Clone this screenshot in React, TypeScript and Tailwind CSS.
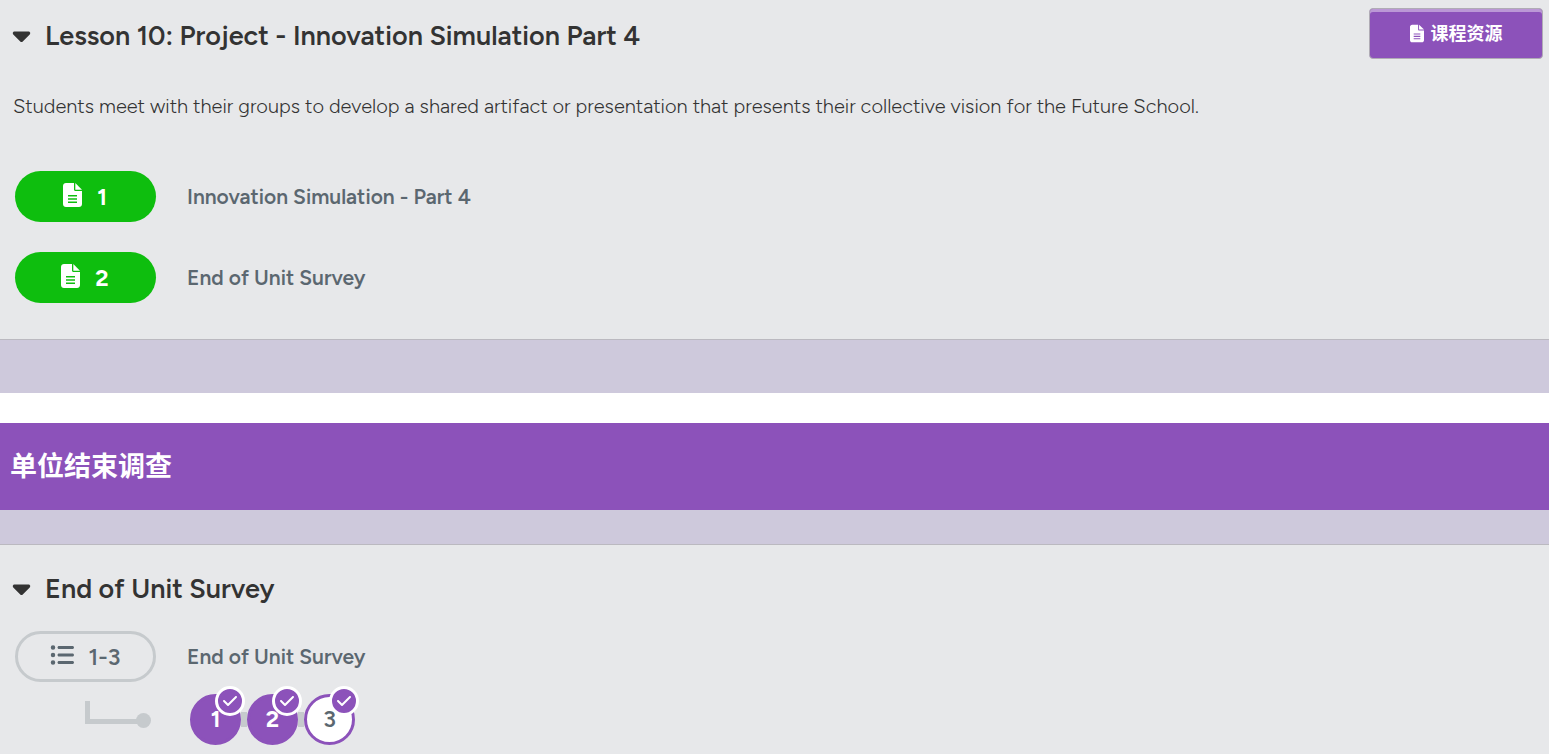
import { FaCaretDown, FaCheck, FaListUl } from "react-icons/fa6";

const bubbles = [
  { number: 1, filled: true },
  { number: 2, filled: true },
  { number: 3, filled: false },
];

const activities = [
  { number: 1, title: "Innovation Simulation - Part 4" },
  { number: 2, title: "End of Unit Survey" },
];

function FileIcon({ className }: { className: string }) {
  return (
    <svg className={className} viewBox="0 0 19 24" fill="currentColor" aria-hidden="true">
      <path
        fillRule="evenodd"
        d="M3 0H11V6.5C11 7.3 11.6 8 12.5 8H19V21C19 22.7 17.7 24 16 24H3C1.3 24 0 22.7 0 21V3C0 1.3 1.3 0 3 0ZM5 12V13.5H14V12ZM5 15.2V16.7H14V15.2ZM5 18.4V19.9H14V18.4Z"
      />
      <path d="M12.3 0L19 6.7H12.3Z" />
    </svg>
  );
}

function SectionTitle({ children }: { children: string }) {
  return (
    <h2 className="text-[27px] leading-9 font-semibold text-[#333333]">
      <button className="flex items-center gap-3.5">
        <FaCaretDown className="w-[19px] h-7 mb-0.5" />
        {children}
      </button>
    </h2>
  );
}

function ActivityRow({ number, title }: { number: number; title: string }) {
  return (
    <li className="flex items-center gap-[31px]">
      <a
        href="#"
        className="w-[141px] h-[51px] shrink-0 rounded-full bg-[#0ebe0e] text-white flex items-center justify-center gap-[15px]"
      >
        <FileIcon className="w-[19px] h-6 mb-1" />
        <span className="text-[23px] leading-8 pt-px pr-px font-bold">{number}</span>
      </a>
      <a href="#" className="text-[21px] leading-7 font-semibold text-[#5b6770]">
        {title}
      </a>
    </li>
  );
}

function ProgressBubbles() {
  return (
    <ol className="flex">
      {bubbles.map((bubble, i) => (
        <li key={bubble.number} className="flex items-center">
          {i > 0 && <div className="w-1.5 h-[15px] bg-[#c6cacd]" />}
          <a
            href="#"
            className={`relative w-[51px] h-[51px] rounded-full border-3 border-[#8c52ba] flex items-center justify-center text-[23px] ${
              bubble.filled ? "bg-[#8c52ba] text-white font-bold" : "bg-white text-[#5b6770] font-semibold"
            }`}
          >
            {bubble.number}
            <span className="absolute -top-[11px] -right-[7px] z-10 w-[30px] h-[30px] rounded-full border-3 border-white bg-[#8c52ba] text-white flex items-center justify-center">
              <FaCheck className="w-4 h-4" />
            </span>
          </a>
        </li>
      ))}
    </ol>
  );
}

export default function App() {
  return (
    <main className="font-['Figtree','Inter','Noto_Sans_CJK_SC',sans-serif] bg-white">
      <section className="bg-[#e7e8ea] border-b border-[#bbb9c0] pb-9">
        <div className="flex items-start justify-between pt-2 pl-3 pr-1.5">
          <div className="pt-2.5">
            <SectionTitle>Lesson 10: Project - Innovation Simulation Part 4</SectionTitle>
          </div>
          <button className="w-[174px] h-[51px] shrink-0 rounded border border-[#b0acb5] bg-[#8c52ba] shadow-[inset_0_3px_0_#bb98d6] text-white text-lg font-bold flex items-center justify-center gap-[7px]">
            <FileIcon className="w-3.5 h-[19px]" />
            <span>课程资源</span>
          </button>
        </div>
        <p className="mt-8 px-[13px] text-xl leading-[30px] font-light text-[#333333]">
          Students meet with their groups to develop a shared artifact or presentation that presents their collective
          vision for the Future School.
        </p>
        <ul className="mt-[50px] px-[15px] flex flex-col gap-[30px]">
          {activities.map((activity) => (
            <ActivityRow key={activity.number} number={activity.number} title={activity.title} />
          ))}
        </ul>
      </section>
      <div className="h-[53px] bg-[#cec9dc]" />

      <div className="mt-[30px] h-[87px] px-2.5 pt-0.5 bg-[#8c52ba] flex items-center">
        <h1 className="text-[27px] font-bold text-white">单位结束调查</h1>
      </div>
      <div className="h-[35px] bg-[#cec9dc] border-b border-[#bbb9c0]" />

      <section className="bg-[#e7e8ea] pt-[26px] pb-[9px]">
        <div className="px-3">
          <SectionTitle>End of Unit Survey</SectionTitle>
        </div>
        <div className="mt-6 px-[15px] flex items-center gap-[31px]">
          <a
            href="#"
            className="w-[141px] h-[51px] shrink-0 rounded-full border-3 border-[#c6cacd] text-[#5b6770] flex items-center justify-center gap-[15px]"
          >
            <FaListUl className="w-6 h-6 mb-1" />
            <span className="text-[23px] leading-8 pt-px pr-px font-semibold">1-3</span>
          </a>
          <a href="#" className="text-[21px] leading-7 font-semibold text-[#5b6770]">
            End of Unit Survey
          </a>
        </div>
        <div className="mt-3 px-[15px] flex items-center">
          <div className="w-[175px] pl-[70px]">
            {/* elbow connector from the pill to the bubbles */}
            <svg className="w-[66px] h-[27px] -mt-2.5" viewBox="0 0 66 27" fill="none">
              <path d="M2.5 0V20.5H58" stroke="#c6cacd" strokeWidth="5" />
              <circle cx="58.5" cy="19.5" r="7.5" fill="#c6cacd" />
            </svg>
          </div>
          <ProgressBubbles />
        </div>
      </section>
    </main>
  );
}
